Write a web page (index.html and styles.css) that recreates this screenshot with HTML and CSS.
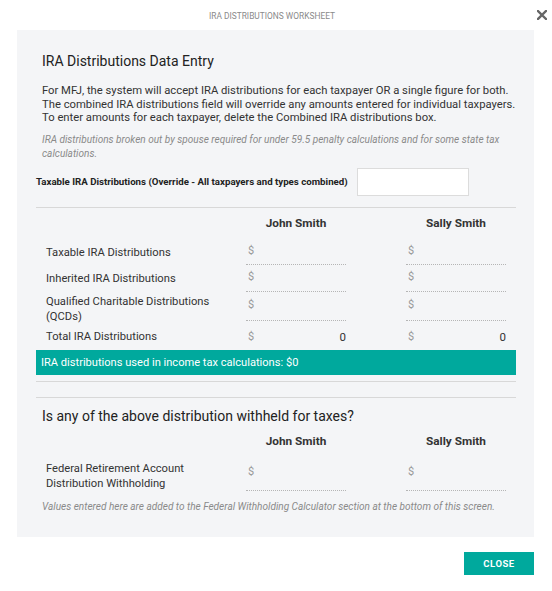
FILE: index.html
```html
<!DOCTYPE html>
<html>
<head>
<meta charset="utf-8">
<link rel="stylesheet" href="styles.css">
</head>
<body>
<div class="header">
  <div class="title">IRA DISTRIBUTIONS WORKSHEET</div>
  <div class="close-x">
    <svg width="10" height="10" viewBox="0 0 10 10"><path d="M1 1L9 9M9 1L1 9" stroke="#666" stroke-width="2.4" stroke-linecap="square"/></svg>
  </div>
</div>
<div class="panel">
  <h2 class="heading">IRA Distributions Data Entry</h2>
  <p class="intro">For MFJ, the system will accept IRA distributions for each taxpayer OR a single figure for both. The combined IRA distributions field will override any amounts entered for individual taxpayers. To enter amounts for each taxpayer, delete the Combined IRA distributions box.</p>
  <p class="note">IRA distributions broken out by spouse required for under 59.5 penalty calculations and for some state tax calculations.</p>
  <div class="override">
    <span class="override-label">Taxable IRA Distributions (Override - All taxpayers and types combined)</span>
    <div class="override-input"></div>
  </div>
  <hr class="rule rule-first">
  <div class="row row-names">
    <div></div>
    <div class="name">John Smith</div>
    <div></div>
    <div class="name">Sally Smith</div>
    <div></div>
  </div>
  <div class="row row-1">
    <div class="label">Taxable IRA Distributions</div>
    <div class="field">$</div>
    <div></div>
    <div class="field">$</div>
    <div></div>
  </div>
  <div class="row row-2">
    <div class="label">Inherited IRA Distributions</div>
    <div class="field">$</div>
    <div></div>
    <div class="field">$</div>
    <div></div>
  </div>
  <div class="row row-3">
    <div class="label">Qualified Charitable Distributions (QCDs)</div>
    <div class="field">$</div>
    <div></div>
    <div class="field">$</div>
    <div></div>
  </div>
  <div class="row row-total">
    <div class="label">Total IRA Distributions</div>
    <div class="field total">$<span class="val">0</span></div>
    <div></div>
    <div class="field total">$<span class="val">0</span></div>
    <div></div>
  </div>
  <div class="banner">IRA distributions used in income tax calculations: $0</div>
  <hr class="rule rule-a">
  <hr class="rule rule-b">
  <h2 class="heading heading2">Is any of the above distribution withheld for taxes?</h2>
  <div class="row row-names row-names2">
    <div></div>
    <div class="name">John Smith</div>
    <div></div>
    <div class="name">Sally Smith</div>
    <div></div>
  </div>
  <div class="row row-fed">
    <div class="label">Federal Retirement Account Distribution Withholding</div>
    <div class="field">$</div>
    <div></div>
    <div class="field">$</div>
    <div></div>
  </div>
  <p class="note note2">Values entered here are added to the Federal Withholding Calculator section at the bottom of this screen.</p>
</div>
<div class="footer">
  <button class="close-btn">CLOSE</button>
</div>
</body>
</html>
```

FILE: styles.css
```css
* { box-sizing: border-box; }
html, body { margin: 0; padding: 0; background: #fff; }
body {
  font-family: Roboto, "Liberation Sans", sans-serif;
  color: #333;
  width: 552px;
}
.header {
  height: 30px;
  position: relative;
  display: flex;
  align-items: center;
  justify-content: center;
}
.title {
  font-size: 8.4px;
  color: #8a8a8a;
  margin-left: -8px;
  margin-top: 2px;
}
.close-x {
  position: absolute;
  right: 5px;
  top: 10px;
  width: 10px;
  height: 10px;
  display: flex;
}
.panel {
  margin-left: 17px;
  width: 517px;
  height: 507px;
  background: #f4f5f7;
  padding: 21px 18px 0 19px;
}
.heading {
  margin: 0 0 0 6px;
  font-size: 14px;
  font-weight: 400;
  color: #222;
  line-height: 20px;
}
.intro {
  margin: 13px -12px 0 6px;
  font-size: 11.25px;
  line-height: 13.5px;
  color: #333;
}
.note {
  margin: 8px 0 0 6px;
  font-size: 10.05px;
  line-height: 14px;
  font-style: italic;
  color: #8a8a8a;
}
.override {
  display: flex;
  align-items: center;
  margin-top: 7px;
}
.override-label {
  font-size: 9.7px;
  font-weight: 700;
  color: #222;
  white-space: nowrap;
  width: 321px;
}
.override-input {
  width: 112px;
  height: 28px;
  background: #fff;
  border: 1px solid #dcdcdc;
}
.rule {
  border: 0;
  border-top: 1px solid #d8d8d8;
  margin: 0;
}
.rule-first { margin-top: 11px; }
.row {
  display: grid;
  grid-template-columns: 210px 100px 60px 100px 10px;
}
.row-names {
  height: 32px;
  padding-top: 7px;
}
.name {
  text-align: center;
  font-size: 11.8px;
  font-weight: 700;
  color: #333;
  line-height: 16px;
}
.label {
  padding-left: 10px;
  padding-right: 20px;
  font-size: 11.2px;
  line-height: 15px;
  color: #333;
  display: flex;
  align-items: center;
}
.field {
  font-size: 11px;
  color: #999;
  border-bottom: 1px dotted #b5b5b5;
  display: flex;
  align-items: center;
  justify-content: space-between;
  padding-left: 2px;
  padding-bottom: 3px;
}
.row-1 { height: 25px; }
.row-2 { height: 27px; }
.row-3 { height: 32px; }
.row-3 .field { margin-bottom: 3px; }
.row-3 .label { padding-top: 2px; }
.row-total { height: 26px; }
.field.total {
  border-bottom: 0;
  padding-bottom: 0;
}
.val {
  color: #333;
  font-size: 11.5px;
}
.banner {
  background: #00a99d;
  color: #fff;
  font-size: 11.1px;
  height: 25px;
  line-height: 25px;
  padding-left: 5px;
}
.rule-a { margin-top: 6px; }
.rule-b { margin-top: 15px; }
.heading2 { margin-top: 8px; }
.row-names2 {
  height: 31px;
  padding-top: 7px;
}
.row-fed { height: 30px; }
.row-fed .label { padding-top: 4px; }
.note2 { margin-top: 13px; }
.footer {
  display: flex;
  justify-content: flex-end;
  padding: 15px 18px 0 0;
}
.close-btn {
  width: 70px;
  height: 23px;
  border: 0;
  background: #00a99d;
  color: #fff;
  font-family: Roboto, "Liberation Sans", sans-serif;
  font-weight: 700;
  font-size: 9.5px;
  letter-spacing: 0.5px;
  padding: 0;
}
```
